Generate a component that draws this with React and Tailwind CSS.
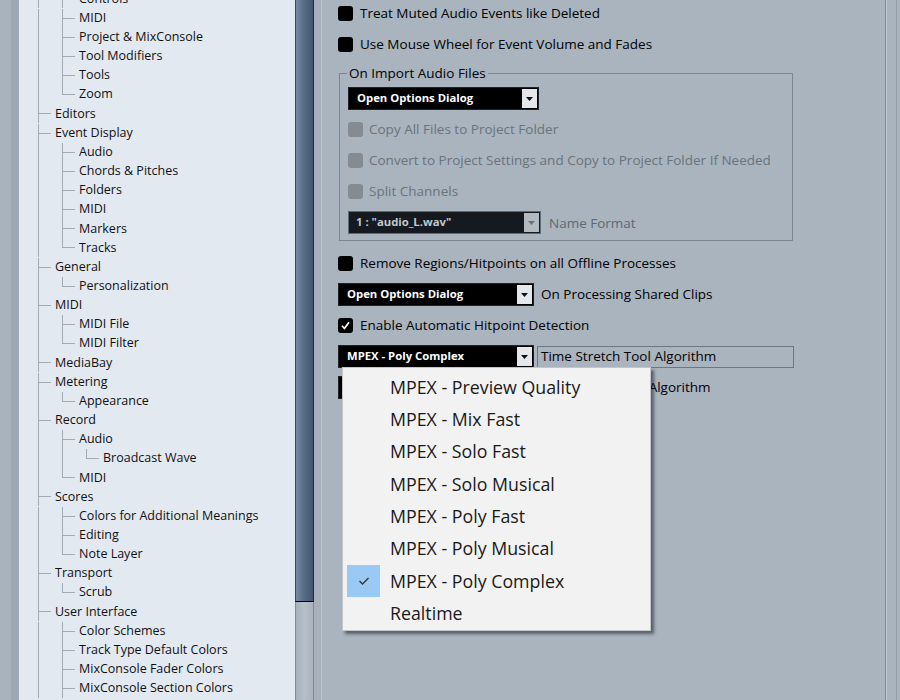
import React from 'react';

// preference tree, scrolled so that "Controls" sits at the top edge
const TREE = [
  {
    label: 'Editing',
    children: ['Audio', 'Controls', 'MIDI', 'Project & MixConsole', 'Tool Modifiers', 'Tools', 'Zoom'],
  },
  { label: 'Editors' },
  {
    label: 'Event Display',
    children: ['Audio', 'Chords & Pitches', 'Folders', 'MIDI', 'Markers', 'Tracks'],
  },
  { label: 'General', children: ['Personalization'] },
  { label: 'MIDI', children: ['MIDI File', 'MIDI Filter'] },
  { label: 'MediaBay' },
  { label: 'Metering', children: ['Appearance'] },
  {
    label: 'Record',
    children: [{ label: 'Audio', children: ['Broadcast Wave'] }, 'MIDI'],
  },
  { label: 'Scores', children: ['Colors for Additional Meanings', 'Editing', 'Note Layer'] },
  { label: 'Transport', children: ['Scrub'] },
  {
    label: 'User Interface',
    more: true,
    children: ['Color Schemes', 'Track Type Default Colors', 'MixConsole Fader Colors', 'MixConsole Section Colors'],
  },
];

function flatten(nodes, depth = 0, rails = [], more = false) {
  const out = [];
  nodes.forEach((n, i) => {
    const node = typeof n === 'string' ? { label: n } : n;
    const last = depth > 0 && i === nodes.length - 1 && !more;
    out.push({ label: node.label, depth, rails, last });
    if (node.children) {
      out.push(...flatten(node.children, depth + 1, [...rails, !last], node.more));
    }
  });
  return out;
}

const ROWS = flatten(TREE);
const LINE = '#a3acb5';

function TreeRow({ row }) {
  const x = 19.5 + row.depth * 24;
  return (
    <div className="flex h-[19.17px] items-center">
      <svg width={36 + row.depth * 24} className="h-full shrink-0" shapeRendering="crispEdges">
        {row.rails.map((on, k) =>
          on ? <line key={k} x1={19.5 + k * 24} x2={19.5 + k * 24} y1="0" y2="100%" stroke={LINE} /> : null
        )}
        <line x1={x} x2={x} y1="0" y2={row.last ? '50%' : '100%'} stroke={LINE} />
        <line x1={x} x2={x + 12} y1="50%" y2="50%" stroke={LINE} />
      </svg>
      <span className="whitespace-nowrap text-[12.5px] text-[#111]">{row.label}</span>
    </div>
  );
}

function Arrow({ fill = '#111' }) {
  return (
    <svg width="7" height="4" viewBox="0 0 7 4">
      <path d="M0 0h7L3.5 4z" fill={fill} />
    </svg>
  );
}

function Combo({ label, width, dim = false }) {
  return (
    <div
      className={
        dim
          ? 'flex h-[23px] shrink-0 items-center border border-[#5e6a75] bg-[#141a20] pl-[7px] pr-px'
          : 'flex h-[23px] shrink-0 items-center border border-[#222] bg-black pl-[8px] pr-px'
      }
      style={{ width }}
    >
      <span className={dim ? 'text-[11.3px] font-bold text-[#c3c8cd]' : 'text-[11.3px] font-bold text-white'}>{label}</span>
      <div
        className={
          dim
            ? 'ml-auto flex h-[19px] w-[15px] items-center justify-center bg-[#b4bac1]'
            : 'ml-auto flex h-[19px] w-[15px] items-center justify-center bg-[#e4e8ec]'
        }
      >
        <Arrow fill={dim ? '#6b737b' : '#111'} />
      </div>
    </div>
  );
}

function Check({ label, checked = false }) {
  return (
    <div className="flex h-[22px] items-center gap-[7px]">
      <div className="flex h-[15px] w-[15px] items-center justify-center rounded-[3px] bg-black">
        {checked && (
          <svg width="11" height="11" viewBox="0 0 11 11">
            <path d="M2 5.8l2.4 2.7L9 2.2" fill="none" stroke="#fff" strokeWidth="1.7" />
          </svg>
        )}
      </div>
      <span className="text-[13.5px] text-black">{label}</span>
    </div>
  );
}

function DimCheck({ label }) {
  return (
    <div className="flex h-[31px] items-center gap-[6px]">
      <div className="h-[15px] w-[15px] rounded-[3px] bg-[#868b91]" />
      <span className="text-[13.5px] text-[#6a737c]">{label}</span>
    </div>
  );
}

const ALGORITHMS = [
  'MPEX - Preview Quality',
  'MPEX - Mix Fast',
  'MPEX - Solo Fast',
  'MPEX - Solo Musical',
  'MPEX - Poly Fast',
  'MPEX - Poly Musical',
  'MPEX - Poly Complex',
  'Realtime',
];

function AlgorithmMenu({ selected }) {
  return (
    <div className="absolute left-[4px] top-[22px] z-10 w-[309px] border border-[#c4c7ca] bg-[#f2f2f2] pb-px pt-[3px] shadow-[3px_3px_3px_rgba(20,28,36,0.55)]">
      {ALGORITHMS.map((name) => (
        <div key={name} className="flex h-[32.3px] items-center">
          <div
            className={
              name === selected
                ? 'ml-[4px] flex h-full w-[33px] items-center justify-center bg-[#99c9f4]'
                : 'ml-[4px] h-full w-[33px]'
            }
          >
            {name === selected && (
              <svg width="12" height="10" viewBox="0 0 12 10">
                <path d="M1.5 5l3 3L10.5 2" fill="none" stroke="#333" strokeWidth="1.3" />
              </svg>
            )}
          </div>
          <span className="ml-[10px] whitespace-nowrap text-[17.8px] text-[#1a1a1a]">{name}</span>
        </div>
      ))}
    </div>
  );
}

export default function App() {
  return (
    <div className="flex h-[700px] w-[900px] overflow-hidden font-['Open_Sans',sans-serif]">
      {/* window frame on the left */}
      <div className="w-[11px] shrink-0 bg-[#a8b3be]" />
      <div className="w-[8px] shrink-0 bg-[#9ca8b3]" />

      {/* category tree */}
      <div className="w-[276px] shrink-0 overflow-hidden bg-[#e3e9f1]">
        <div className="-mt-[48.9px]">
          {ROWS.map((row, i) => (
            <TreeRow key={i} row={row} />
          ))}
        </div>
      </div>

      {/* tree scrollbar */}
      <div className="flex w-[19px] shrink-0 flex-col">
        <div className="h-[602px] border-b border-l border-r border-b-black border-l-[#3a4757] border-r-[#222b36] bg-gradient-to-r from-[#7a8ca2] via-[#566a84] to-[#425570]" />
        <div className="flex-1 border-l border-r border-l-[#7f8a95] border-r-[#7f8a95] bg-gradient-to-r from-[#a7b1bb] via-[#b7c0c9] to-[#a9b3bd]" />
      </div>
      <div className="w-[8px] shrink-0 border-r border-r-[#bcc5ce] bg-[#a6b1bc]" />

      {/* settings page */}
      <div className="relative flex-1 bg-[#a9b4bf] pl-[16px] pt-[2px]">
        <Check label="Treat Muted Audio Events like Deleted" />
        <div className="mt-[9px]">
          <Check label="Use Mouse Wheel for Event Volume and Fades" />
        </div>

        <div className="ml-px mt-[18px] w-[454px] border border-[#7b8691] px-[8px] pb-[6px] pt-[13px]">
          <div className="-ml-[1px] -mt-[23px] mb-[5px] w-fit bg-[#a9b4bf] px-[2px] text-[13.5px] leading-[18px] text-black">
            On Import Audio Files
          </div>
          <Combo label="Open Options Dialog" width={191} />
          <div className="mt-[4px]">
            <DimCheck label="Copy All Files to Project Folder" />
            <DimCheck label="Convert to Project Settings and Copy to Project Folder If Needed" />
            <DimCheck label="Split Channels" />
          </div>
          <div className="mt-[4px] flex items-center gap-[8px]">
            <Combo label={'1 : "audio_L.wav"'} width={193} dim />
            <span className="pt-px text-[13.5px] text-[#5f6871]">Name Format</span>
          </div>
        </div>

        <div className="mt-[11px]">
          <Check label="Remove Regions/Hitpoints on all Offline Processes" />
        </div>
        <div className="mt-[9px] flex items-center gap-[7px]">
          <Combo label="Open Options Dialog" width={196} />
          <span className="text-[13.5px] text-black">On Processing Shared Clips</span>
        </div>
        <div className="mt-[8px]">
          <Check label="Enable Automatic Hitpoint Detection" checked />
        </div>

        <div className="relative mt-[9px] flex items-center gap-[3px]">
          <Combo label="MPEX - Poly Complex" width={196} />
          <div className="flex h-[22px] w-[257px] items-center border border-[#6f7880] pl-[3px] text-[13.5px] text-black">
            Time Stretch Tool Algorithm
          </div>
          <AlgorithmMenu selected="MPEX - Poly Complex" />
        </div>
        <div className="mt-[8px] flex items-center gap-[7px]">
          <Combo label="Standard" width={196} />
          <span className="pl-[68px] text-[13.5px] text-black">Sizing Algorithm</span>
        </div>
      </div>

      {/* window frame on the right */}
      <div className="flex w-[15px] shrink-0 bg-[#a9b4bf]">
        <div className="w-px bg-[#7f8a94]" />
        <div className="w-px bg-[#c2cbd3]" />
        <div className="w-[9px]" />
        <div className="w-px bg-[#939ea8]" />
      </div>
    </div>
  );
}
